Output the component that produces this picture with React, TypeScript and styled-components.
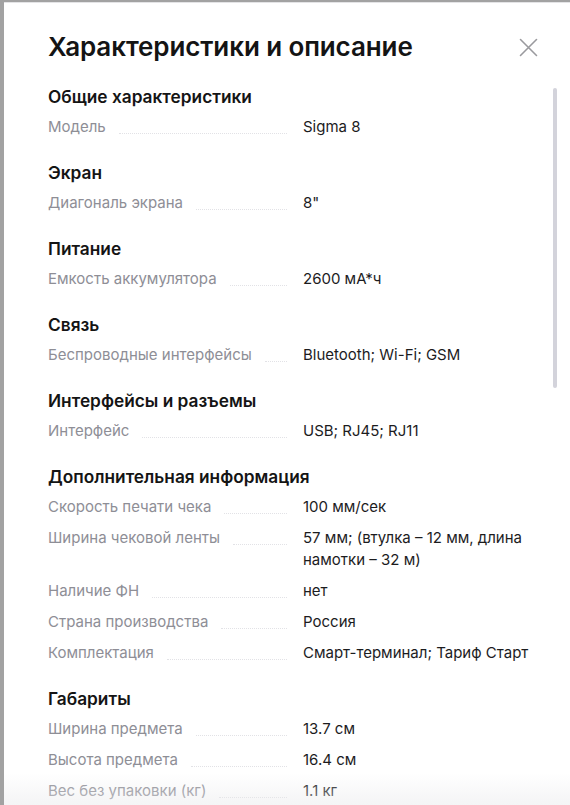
import React from "react";
import styled, { createGlobalStyle } from "styled-components";

const Global = createGlobalStyle`
  html, body { margin: 0; padding: 0; }
  body {
    background: #a2a2a2;
    font-family: Inter, "Noto Sans", sans-serif;
    -webkit-font-smoothing: antialiased;
  }
`;

const Page = styled.div`
  height: 805px;
  padding-left: 4px;
  box-sizing: border-box;
  overflow: hidden;
`;

const Modal = styled.div`
  position: relative;
  height: 805px;
  background: #fff;
  border-top: 1px solid #e4e4e6;
  margin-top: 2px;
  box-sizing: border-box;
  padding: 28px 0 0 44px;
  overflow: hidden;
`;

const Header = styled.div`
  display: flex;
  align-items: center;
  justify-content: space-between;
  padding-right: 29px;
  height: 32px;
`;

const Title = styled.h1`
  margin: 0;
  font-size: 26px;
  line-height: 32px;
  font-weight: 600;
  color: #141414;
  letter-spacing: -0.1px;
`;

const Close = styled.button`
  display: flex;
  align-items: center;
  justify-content: center;
  width: 26px;
  height: 26px;
  padding: 0;
  border: none;
  background: transparent;
  color: #9a9a9e;
`;

const Body = styled.div`
  display: flex;
  flex-direction: column;
  gap: 23px;
  padding-top: 22px;
  width: 484px;
`;

const Section = styled.section`
  display: flex;
  flex-direction: column;
`;

const Heading = styled.h2`
  margin: 0 0 7px;
  font-size: 17.3px;
  line-height: 24px;
  font-weight: 600;
  color: #141414;
`;

const Rows = styled.div`
  display: flex;
  flex-direction: column;
  gap: 9px;
`;

const Row = styled.div`
  display: grid;
  grid-template-columns: 239px 230px;
  column-gap: 16px;
  align-items: start;
  font-size: 15px;
  line-height: 22px;
`;

const LabelCell = styled.div`
  display: flex;
  align-items: flex-start;
  gap: 13px;
  min-width: 0;
`;

const Label = styled.span`
  color: #8e8e96;
  white-space: nowrap;
`;

const Dots = styled.span`
  flex: 1;
  height: 1px;
  margin-top: 16px;
  border-bottom: 1px dotted #e2e2e6;
`;

const Value = styled.span`
  color: #1c1c1e;
`;

const Scrollbar = styled.div`
  position: absolute;
  right: 13px;
  top: 85px;
  width: 4px;
  height: 300px;
  border-radius: 2px;
  background: #d3d3db;
`;

const Fade = styled.div`
  position: absolute;
  left: 0;
  right: 0;
  bottom: 0;
  height: 34px;
  background: linear-gradient(to bottom, rgba(236, 236, 238, 0), rgba(234, 234, 236, 0.55));
  pointer-events: none;
`;

type Item = [string, string];
const data: { title: string; items: Item[] }[] = [
  { title: "Общие характеристики", items: [["Модель", "Sigma 8"]] },
  { title: "Экран", items: [["Диагональ экрана", "8\""]] },
  { title: "Питание", items: [["Емкость аккумулятора", "2600 мА*ч"]] },
  { title: "Связь", items: [["Беспроводные интерфейсы", "Bluetooth; Wi-Fi; GSM"]] },
  { title: "Интерфейсы и разъемы", items: [["Интерфейс", "USB; RJ45; RJ11"]] },
  {
    title: "Дополнительная информация",
    items: [
      ["Скорость печати чека", "100 мм/сек"],
      ["Ширина чековой ленты", "57 мм; (втулка – 12 мм, длина намотки – 32 м)"],
      ["Наличие ФН", "нет"],
      ["Страна производства", "Россия"],
      ["Комплектация", "Смарт-терминал; Тариф Старт"],
    ],
  },
  {
    title: "Габариты",
    items: [
      ["Ширина предмета", "13.7 см"],
      ["Высота предмета", "16.4 см"],
      ["Вес без упаковки (кг)", "1.1 кг"],
    ],
  },
];

export default function App() {
  return (
    <>
      <Global />
      <Page>
        <Modal>
          <Header>
            <Title>Характеристики и описание</Title>
            <Close aria-label="Закрыть">
              <svg width="19" height="19" viewBox="0 0 19 19" fill="none">
                <path d="M1.5 1.5 L17.5 17.5 M17.5 1.5 L1.5 17.5" stroke="currentColor" strokeWidth="1.6" strokeLinecap="round" />
              </svg>
            </Close>
          </Header>
          <Body>
            {data.map((s) => (
              <Section key={s.title}>
                <Heading>{s.title}</Heading>
                <Rows>
                  {s.items.map(([l, v]) => (
                    <Row key={l}>
                      <LabelCell>
                        <Label>{l}</Label>
                        <Dots />
                      </LabelCell>
                      <Value>{v}</Value>
                    </Row>
                  ))}
                </Rows>
              </Section>
            ))}
          </Body>
          <Scrollbar />
          <Fade />
        </Modal>
      </Page>
    </>
  );
}
